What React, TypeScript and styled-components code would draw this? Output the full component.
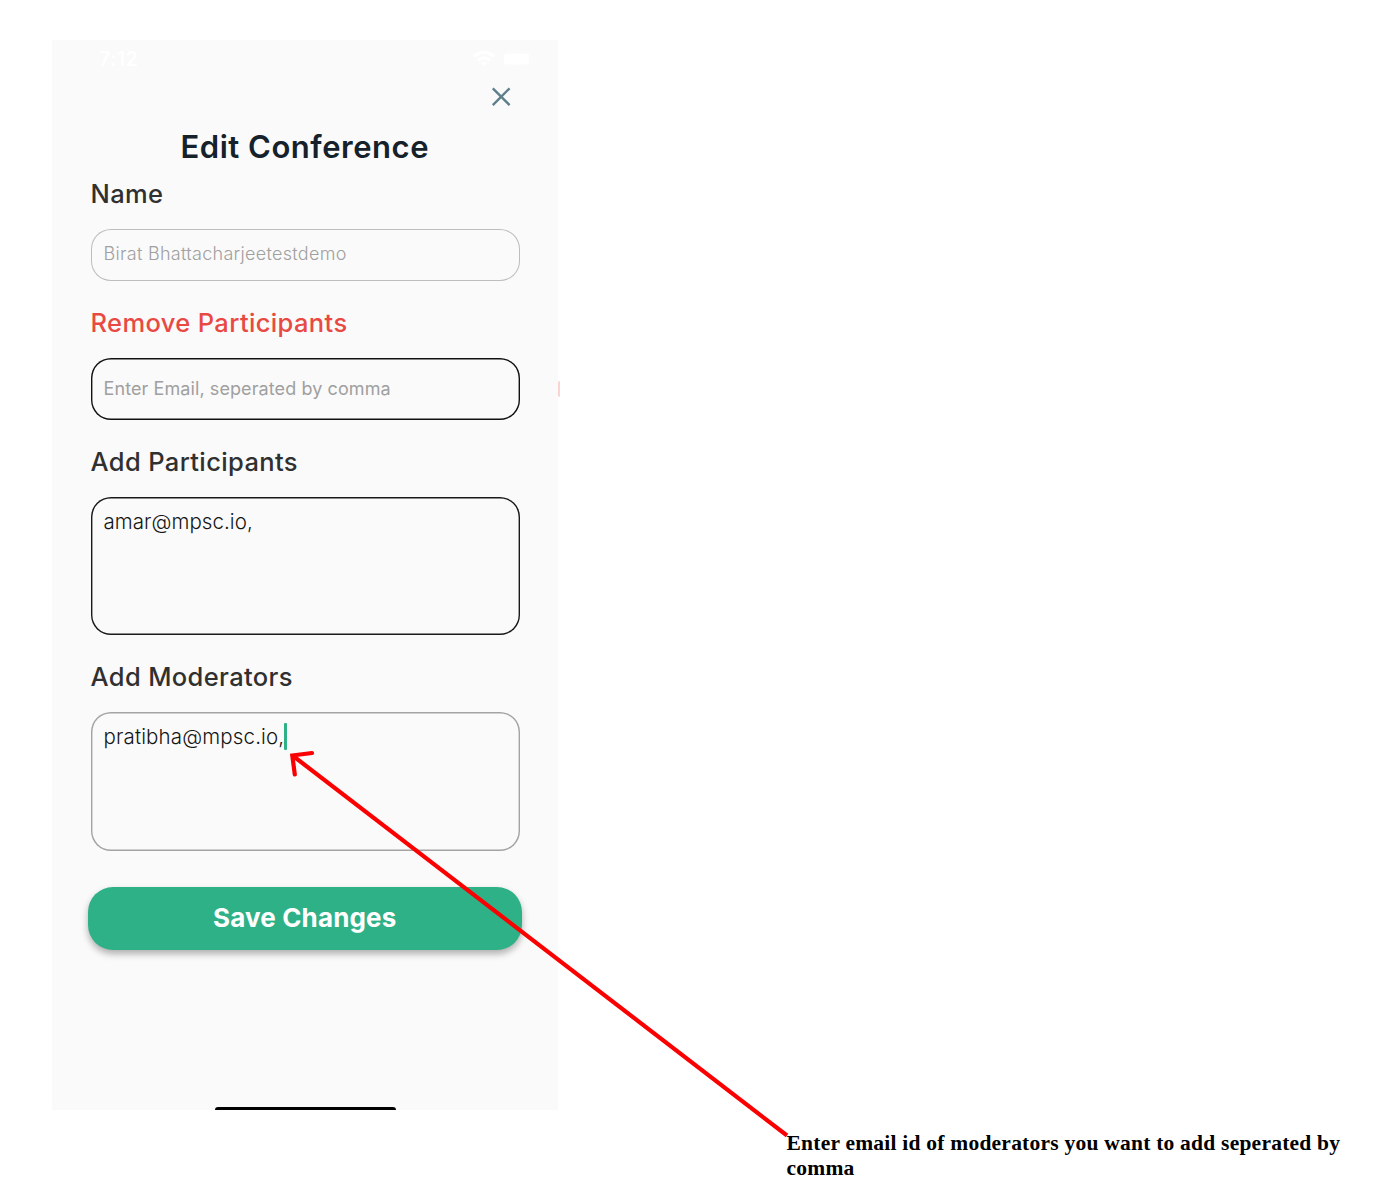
import React from "react";
import styled, { createGlobalStyle } from "styled-components";

const GlobalStyle = createGlobalStyle`
  * { box-sizing: border-box; }
  body { margin: 0; background: #ffffff; }
`;

const Page = styled.main`
  position: relative;
  width: 1376px;
  height: 1204px;
  padding: 40px 0 0 51.5px;
  overflow: hidden;
  font-family: Inter, "Liberation Sans", sans-serif;
`;

const Phone = styled.section`
  position: relative;
  display: flex;
  flex-direction: column;
  width: 506.5px;
  height: 1070px;
  background: #fafafa;
`;

const StatusBar = styled.div`
  display: flex;
  align-items: center;
  justify-content: space-between;
  height: 37px;
  padding: 0 24px 0 47.5px;
  color: #ffffff;
`;

const Clock = styled.span`
  font-size: 20px;
  font-weight: 600;
  letter-spacing: 0.3px;
`;

const StatusIcons = styled.div`
  display: flex;
  gap: 7px;
`;

const CloseRow = styled.div`
  display: flex;
  justify-content: flex-end;
  height: 40px;
  padding: 10px 47px 0 0;
`;

const CloseButton = styled.button`
  display: flex;
  width: 20px;
  height: 20px;
  padding: 0;
  border: 0;
  background: none;
`;

const Title = styled.h1`
  margin: 10px 0 12px;
  height: 40px;
  text-align: center;
  font-size: 31px;
  line-height: 40px;
  font-weight: 640;
  letter-spacing: 0.53px;
  color: #15212b;
`;

const Form = styled.form`
  display: flex;
  flex-direction: column;
  padding: 0 38.5px 0 39px;
`;

const Label = styled.label<{ $danger?: boolean }>`
  height: 30px;
  font-size: 25.5px;
  line-height: 30px;
  font-weight: 450;
  letter-spacing: 0.37px;
  color: ${(p) => (p.$danger ? "#e84a43" : "#303030")};
`;

const Field = styled.div<{ $height: number; $border: string; $gap: number; $width?: number }>`
  display: flex;
  height: ${(p) => p.$height}px;
  margin: 20px 0 ${(p) => p.$gap}px;
  padding: 0 13px;
  box-shadow: inset 0 0 0 ${(p) => p.$width ?? 1.4}px ${(p) => p.$border};
  border-radius: 20px;
`;

const Value = styled.span<{ $size: number; $line: number; $weight: number; $color: string; $spacing: number }>`
  font-size: ${(p) => p.$size}px;
  line-height: ${(p) => p.$line}px;
  font-weight: ${(p) => p.$weight};
  letter-spacing: ${(p) => p.$spacing}px;
  color: ${(p) => p.$color};
  white-space: nowrap;
`;

const Caret = styled.span`
  width: 3px;
  height: 27px;
  margin: 11px 0 0 -0.5px;
  border-radius: 1px;
  background: #2fb187;
`;

const SaveButton = styled.button`
  height: 62.5px;
  margin: 0 -2.4px 0 -3px;
  padding: 0;
  border: 0;
  border-radius: 25px;
  background: #2fb187;
  box-shadow: 0 4px 7px rgba(0, 0, 0, 0.3);
  color: #ffffff;
  font: 680 26px/61px Inter, "Liberation Sans", sans-serif;
  letter-spacing: 0.15px;
  display: flex;
  justify-content: center;
`;

const HomeBar = styled.div`
  width: 181px;
  height: 3.5px;
  margin: auto auto 0 163.5px;
  border-radius: 4px 4px 0 0;
  background: #000000;
`;

const EdgeMark = styled.i`
  position: absolute;
  left: 506.5px;
  top: 341px;
  width: 2px;
  height: 16px;
  border-radius: 2px 0 0 2px;
  background: #fbd3d3;
`;

const Arrow = styled.svg`
  position: absolute;
  left: 0;
  top: 0;
  pointer-events: none;
`;

const Note = styled.p`
  position: absolute;
  left: 786.5px;
  top: 1131px;
  width: 575px;
  margin: 0;
  font: bold 21.5px/25px "Liberation Serif", serif;
  letter-spacing: 0.23px;
  color: #000000;
`;

export default function App() {
  return (
    <Page>
      <GlobalStyle />
      <Phone>
        <StatusBar>
          <Clock>7:12</Clock>
          <StatusIcons>
            <svg width="22" height="16" viewBox="0 0 22 16" fill="none" stroke="#fff" strokeWidth="3">
              <path d="M1 5.5Q11-3 21 5.5M5 9.5Q11 4.5 17 9.5" />
              <path d="M11 15L8 12Q11 9.5 14 12Z" fill="#fff" stroke="none" />
            </svg>
            <svg width="32" height="16" viewBox="0 0 32 16" fill="#fff">
              <rect x=".7" y=".7" width="27.6" height="14.6" rx="4.5" fill="none" stroke="#fff" strokeOpacity=".4" />
              <rect x="2" y="2.5" width="25" height="11" rx="3" />
              <path d="M30 5.5Q32 8 30 10.5Z" opacity=".4" />
            </svg>
          </StatusIcons>
        </StatusBar>
        <CloseRow>
          <CloseButton aria-label="Close" type="button">
            <svg width="20" height="20" viewBox="0 0 20 20" stroke="#5f7f8c" strokeWidth="2.4">
              <path d="M1.8 1.3L18.6 18.1M18.6 1.3L1.8 18.1" />
            </svg>
          </CloseButton>
        </CloseRow>
        <Title>Edit Conference</Title>
        <Form>
          <Label>Name</Label>
          <Field $height={52} $border="#bdbdbd" $gap={27} $width={1}>
            <Value $size={18} $line={49} $weight={300} $color="#a0a0a0" $spacing={0.29}>Birat Bhattacharjeetestdemo</Value>
          </Field>
          <Label $danger>Remove Participants</Label>
          <Field $height={61.5} $border="#111111" $gap={27}>
            <Value $size={18} $line={61} $weight={390} $color="#a0a0a0" $spacing={0.09}>Enter Email, seperated by comma</Value>
          </Field>
          <Label>Add Participants</Label>
          <Field $height={138.5} $border="#191919" $gap={27}>
            <Value $size={20.5} $line={50} $weight={300} $color="#151515" $spacing={0.06}>amar@mpsc.io,</Value>
          </Field>
          <Label>Add Moderators</Label>
          <Field $height={138.5} $border="#a3a3a3" $gap={36.5}>
            <Value $size={20.5} $line={50} $weight={300} $color="#151515" $spacing={0.15}>pratibha@mpsc.io,</Value>
            <Caret />
          </Field>
          <SaveButton type="button">Save Changes</SaveButton>
        </Form>
        <HomeBar />
        <EdgeMark />
      </Phone>
      <Note>Enter email id of moderators you want to add seperated by comma</Note>
      <Arrow width="1376" height="1204" viewBox="0 0 1376 1204" fill="none" stroke="#fa0000" strokeWidth="4.2">
        <path d="M292.5 755.5L787 1135.5" />
        <path d="M312 753L292.3 755.5L294.8 774.5" strokeLinecap="round" />
      </Arrow>
    </Page>
  );
}
